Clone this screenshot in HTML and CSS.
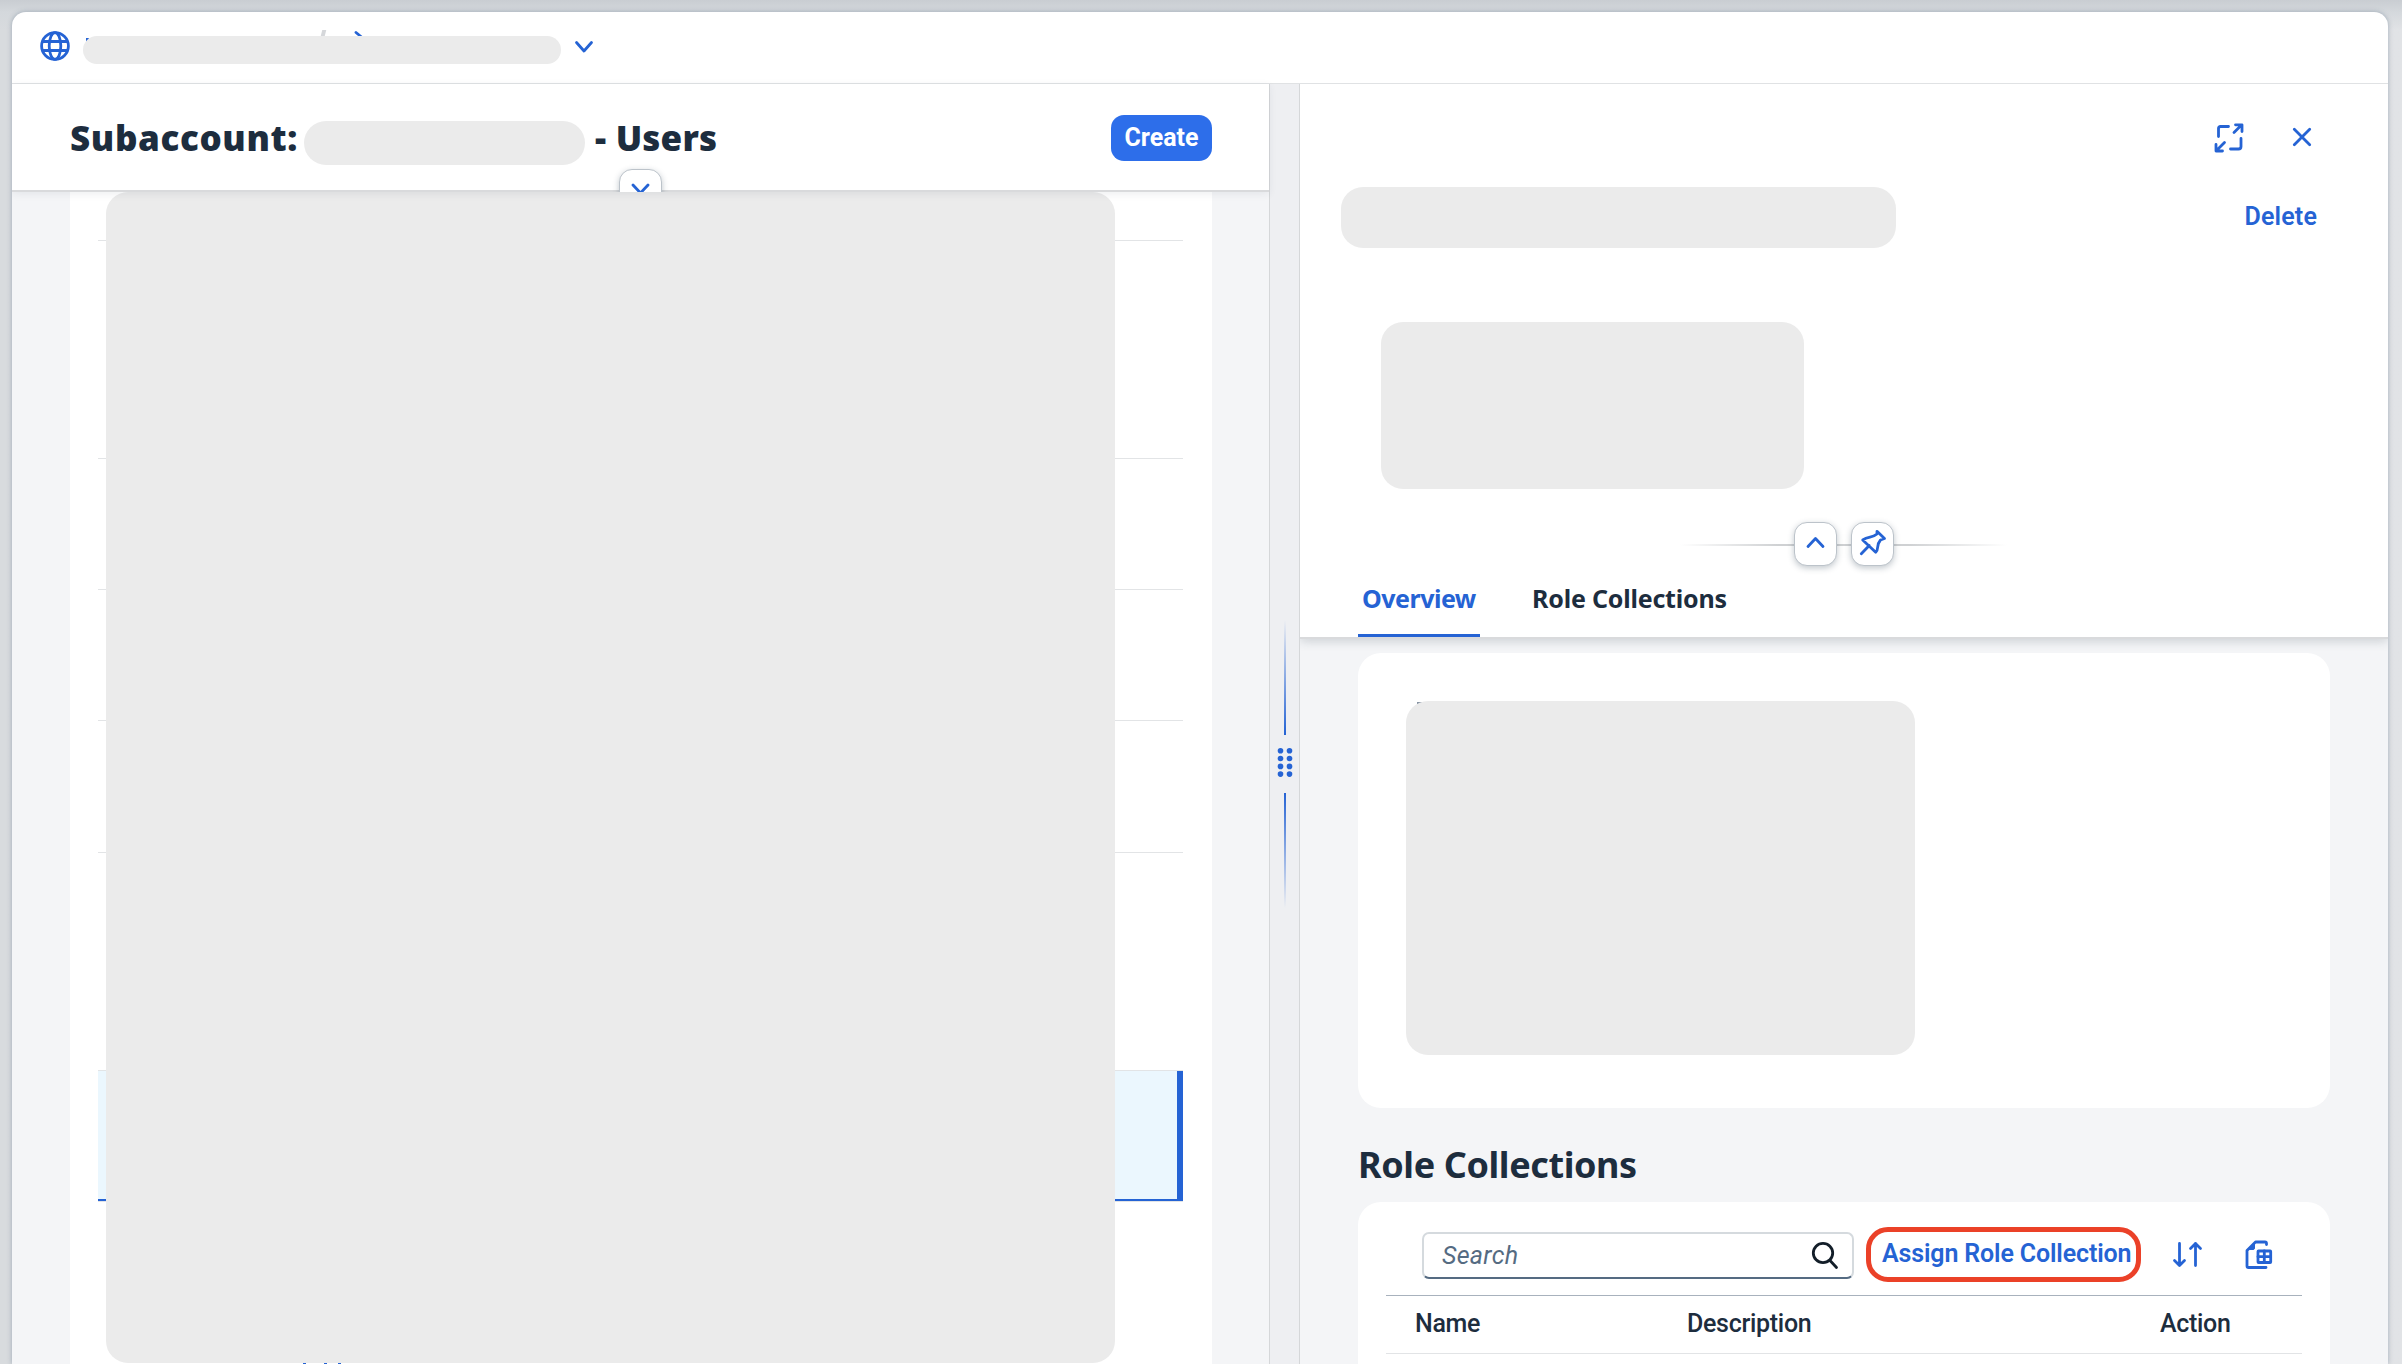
FILE: index.html
```html
<!DOCTYPE html>
<html lang="en">
<head>
<meta charset="utf-8">
<title>Subaccount - Users</title>
<link rel="stylesheet" href="styles.css">
</head>
<body>
<div class="window">
  <header class="shell">
    <svg class="globe" viewBox="0 0 30 30"><circle cx="15" cy="15" r="13.4"/><ellipse cx="15" cy="15" rx="5.8" ry="13.4"/><path d="M3 10.5H27M3 19.5H27"/></svg>
    <div class="crumbs"><i class="crumb-bit"></i><i class="crumb-slash"></i><svg class="crumb-arrow" viewBox="0 0 10 8"><path d="M2 1.5L8 6.5"/></svg><div class="mask"></div></div>
    <svg class="chev" viewBox="0 0 20 14"><path d="M2.5 2.5L10 11L17.5 2.5"/></svg>
  </header>
  <div class="columns">
    <section class="users">
      <div class="users-head">
        <h1 class="title"><span class="t-sub">Subaccount:</span><span class="title-mask mask"></span><span class="t-users">- Users</span></h1>
        <button class="create">Create</button>
        <div class="expand-clip"><div class="round-btn"><svg viewBox="0 0 43 44"><path d="M14 16L21.500 24L29 16"/></svg></div></div>
      </div>
      <div class="users-body">
        <div class="list">
          <div class="row r1"></div><div class="row r2"></div><div class="row r3"></div><div class="row r4"></div><div class="row r5"></div><div class="row r6"></div>
          <div class="row selected"></div>
          <div class="row-rest"></div>
          <div class="list-mask mask"></div>
          <i class="bit b1"></i><i class="bit b2"></i><i class="bit b3"></i>
        </div>
      </div>
    </section>
    <div class="splitter">
      <div class="grip-line up"></div>
      <svg class="dots" viewBox="0 0 16 58"><g><circle cx="3.5" cy="15.7" r="2.8"/><circle cx="12.5" cy="15.7" r="2.8"/><circle cx="3.5" cy="23.5" r="2.8"/><circle cx="12.5" cy="23.5" r="2.8"/><circle cx="3.5" cy="31.4" r="2.8"/><circle cx="12.5" cy="31.4" r="2.8"/><circle cx="3.5" cy="39.1" r="2.8"/><circle cx="12.5" cy="39.1" r="2.8"/></g></svg>
      <div class="grip-line down"></div>
    </div>
    <section class="detail">
      <div class="detail-head">
        <div class="win-actions">
          <svg class="full" viewBox="0 0 30 30"><path d="M4.500 13.500V5.500Q4.500 3.500 6.500 3.500H14.500M27 15.500V23.500Q27 26 24.500 26H16.500M20 9.500L27.500 2M21.500 1.800H28V8.500M10.500 19.500L3 27M2 21.500V28H8.500"/></svg>
          <svg class="close" viewBox="0 0 20 20"><path d="M2.300 2.300L17.700 17.700M17.700 2.300L2.300 17.700"/></svg>
        </div>
        <div class="name-row"><div class="name-mask mask"></div><a class="link delete">Delete</a></div>
        <div class="info-mask mask"></div>
        <div class="collapse"><div class="round-btn"><svg viewBox="0 0 43 44"><path d="M14 24.500L21.500 16.500L29 24.500"/></svg></div><div class="round-btn"><svg viewBox="0 0 43 44"><path d="M10.300 31.700L18.300 23.500M26 9.300L33.500 16.500L29.500 18Q27 21 26.700 25Q26.500 28.500 24.700 30.300L11.700 18Q14.500 16 19 15.200Q23 14.500 26 12Z"/></svg></div></div>
        <nav class="tabs"><div class="tab active">Overview</div><div class="tab">Role Collections</div></nav>
      </div>
      <div class="detail-body">
        <div class="card overview"><i class="card-bit"></i><div class="card-mask mask"></div></div>
        <h2 class="h-rc">Role Collections</h2>
        <div class="card roles">
          <div class="toolbar">
            <div class="search"><span>Search</span><svg viewBox="0 0 28 30"><circle cx="12" cy="12" r="9.700"/><path d="M19 19.500L25.500 26.500"/></svg></div>
            <a class="assign link">Assign Role Collection</a>
            <svg class="sort" viewBox="0 0 32 30"><path d="M7.500 3.500V25.500M2.500 20.500L7.500 25.500L12.500 20.500M23.500 25.500V3.500M18.500 8.500L23.500 3.500L28.500 8.500"/></svg>
            <svg class="export" viewBox="0 0 28 30"><path d="M21.500 4.500V3.500Q21.500 2 20 2H10.500L2 10.500V26Q2 27.500 3.500 27.500H21"/><path class="fold" d="M9.500 3V8Q9.500 9.500 8 9.500H3Z"/><rect x="13" y="11" width="12.700" height="11.500" rx=".5"/><path d="M19.300 11V22.500M13 16.700H25.500"/></svg>
          </div>
          <div class="thead"><span class="c-name">Name</span><span class="c-desc">Description</span><span class="c-act">Action</span></div>
        </div>
      </div>
    </section>
  </div>
</div>
</body>
</html>
```
FILE: styles.css
```css
* { box-sizing: border-box; }
body {
  margin: 0; width: 2402px; height: 1364px; overflow: hidden;
  padding: 12px 14px 0 12px;
  font-family: Roboto, "Liberation Sans", sans-serif; font-size: 25px; color: #1d2d3e;
  background: linear-gradient(180deg, #c9cdd2 0, #d4d8dc 12px, transparent 30px), linear-gradient(90deg, #d8dbde 0, #d4d8dc 50%, #e1e3e6 100%);
}
h1, h2 { margin: 0; }
svg { display: block; fill: none; stroke: #2563d4; stroke-width: 2.8; stroke-linecap: round; stroke-linejoin: round; flex: none; }
h1, h2, a, span { white-space: nowrap; }
.mask { background: #ebebeb; border-radius: 22px; }
.window {
  height: 1352px; display: flex; flex-direction: column; background: #fff; overflow: hidden;
  border-radius: 14px 14px 0 0; box-shadow: 0 0 5px rgba(85, 107, 130, .45);
}
.shell { height: 72px; flex: none; border-bottom: 1px solid #e0e2e4; display: flex; padding-left: 28px; }
.globe { width: 30px; height: 30px; margin-top: 19px; }
.crumbs { width: 478px; height: 28px; margin: 24px 0 0 13px; position: relative; }
.crumbs .mask { position: absolute; inset: 0; border-radius: 15px; }
.crumb-bit { position: absolute; left: 3px; top: 2px; width: 3px; height: 4px; background: #2563d4; }
.crumb-slash { position: absolute; left: 238px; top: -6px; width: 4px; height: 10px; background: #d5d7da; transform: skewX(-14deg); }
.crumb-arrow { position: absolute; left: 271px; top: -5px; width: 10px; height: 8px; }
.chev { width: 20px; height: 14px; margin: 28px 0 0 13px; }
.columns { flex: 1; display: flex; min-height: 0; }

.users { width: 1257px; display: flex; flex-direction: column; background: #f4f5f7; }
.users-head {
  height: 108px; flex: none; position: relative; z-index: 1; background: #fff; border-bottom: 2px solid #d9dadc;
  box-shadow: 0 2px 8px rgba(34, 53, 72, .08); display: flex; justify-content: space-between; padding: 31px 57px 0 58px;
}
.title { display: flex; font-family: "Noto Sans", sans-serif; font-size: 35px; font-weight: 900; line-height: 46px; }
.t-sub { width: 234px; letter-spacing: .62px; }
.title-mask { width: 281px; height: 44px; margin-top: 6px; }
.t-users { margin-left: 10px; letter-spacing: .2px; }
.create { width: 101px; height: 46px; border: 0; border-radius: 13px; background: #2d6eea; color: #fff; font: 700 25px/46px Roboto, sans-serif; padding: 0; }
.expand-clip { position: absolute; left: 597px; top: 75px; width: 70px; height: 33px; overflow: hidden; padding: 10px; }
.round-btn { width: 43px; height: 44px; flex: none; border: 1px solid #bcc3ca; border-radius: 13px; background: #fff; box-shadow: 0 2px 6px rgba(34, 53, 72, .28); }
.round-btn svg { width: 43px; height: 44px; margin: -1px; }
.users-body { flex: 1; padding: 0 57px 0 58px; }
.list { height: 1172px; background: #fff; padding: 0 29px 0 28px; position: relative; display: flex; flex-direction: column; overflow: hidden; }
.row { border-bottom: 1px solid #e2e4e6; flex: none; }
.r1 { height: 49px; } .r2 { height: 218px; } .r3 { height: 131px; } .r4 { height: 131px; } .r5 { height: 132px; } .r6 { height: 218px; }
.selected { height: 130px; background: #ebf7fe; border-bottom: 2px solid #2563d4; border-right: 6px solid #2563d4; }
.row-rest { border-top: 1px solid #e2e4e6; }
.list-mask { position: absolute; left: 36px; top: 0; width: 1009px; height: 1171px; }
.bit { position: absolute; top: 1171px; width: 3px; height: 1px; background: #2563d4; }
.b1 { left: 233px; } .b2 { left: 254px; } .b3 { left: 268px; }

.splitter { width: 31px; flex: none; background: #eeeff2; border: solid #d5d7d9; border-width: 0 1px; display: flex; flex-direction: column; align-items: center; padding-top: 536px; }
.grip-line { width: 2px; height: 115px; }
.grip-line.up { background: linear-gradient(0deg, #2563d4, rgba(37, 99, 212, 0)); }
.grip-line.down { background: linear-gradient(180deg, #2563d4, rgba(37, 99, 212, 0)); }
.dots { width: 16px; height: 58px; fill: #2563d4; stroke: none; }

.detail { flex: 1; display: flex; flex-direction: column; background: #f4f5f7; }
.detail-head { height: 555px; flex: none; background: #fff; border-bottom: 2px solid #d9dadc; box-shadow: 0 2px 10px rgba(34, 53, 72, .2); position: relative; z-index: 1; display: flex; flex-direction: column; clip-path: inset(0 0 -14px 0); }
.win-actions { height: 103px; flex: none; display: flex; justify-content: flex-end; align-items: flex-start; padding: 39px 76px 0 0; }
.full { width: 30px; height: 30px; }
.close { width: 20px; height: 20px; margin: 4px 0 0 48px; }
.name-row { height: 61px; flex: none; display: flex; justify-content: space-between; padding: 0 71px 0 41px; }
.name-mask { width: 555px; }
.link { color: #2563d4; font-weight: 600; }
.delete { line-height: 59px; letter-spacing: .15px; }
.info-mask { width: 423px; height: 167px; margin: 74px 0 0 81px; flex: none; }
.collapse { height: 44px; flex: none; margin: 33px 0 0 380px; width: 327px; display: flex; gap: 14px; padding-left: 114px; background: linear-gradient(90deg, transparent, #cfd1d3 30%, #cfd1d3 70%, transparent) 0 22px / 100% 2px no-repeat; }
.tabs { flex: 1; display: flex; gap: 50px; padding-left: 58px; font-family: "Noto Sans", sans-serif; }
.tab { height: 71px; padding: 0 3px 0 2px; line-height: 64px; font-weight: 700; letter-spacing: -.2px; }
.tab.active { width: 122px; padding-left: 4px; color: #2563d4; letter-spacing: -.5px; background: linear-gradient(#2563d4, #2563d4) 0 100% / 100% 3px no-repeat; }
.detail-body { flex: 1; padding: 14px 58px 0; }
.card { background: #fff; border-radius: 23px; }
.overview { height: 455px; padding: 48px; position: relative; }
.card-mask { width: 509px; height: 354px; position: relative; }
.card-bit { position: absolute; left: 59px; top: 49px; width: 5px; height: 4px; background: #8794a3; }
.h-rc { height: 94px; font-family: "Noto Sans", sans-serif; font-size: 36px; line-height: 113px; font-weight: 700; letter-spacing: -.4px; }
.roles { height: 200px; padding: 25px 28px 0; }
.toolbar { height: 69px; display: flex; border-bottom: 1px solid #a8b2bd; padding-left: 36px; }
.search { width: 432px; height: 47px; margin-top: 5px; border: 2px solid #d5dade; border-bottom-color: #556b82; border-radius: 7px; display: flex; justify-content: space-between; padding: 0 13px 0 18px; line-height: 43px; font-style: italic; color: #556b82; letter-spacing: .3px; }
.search svg { width: 28px; height: 30px; margin-top: 7px; stroke: #131e29; }
.assign { width: 275px; height: 55px; margin-left: 12px; border: 5px solid #eb4128; border-radius: 22px; padding-left: 11px; line-height: 44px; letter-spacing: -.14px; }
.sort { width: 32px; height: 30px; margin: 13px 0 0 31px; }
.export { width: 28px; height: 30px; margin: 13px 0 0 41px; }
.fold { fill: #2563d4; stroke-width: 1; }
.thead { height: 58px; border-bottom: 1px solid #e2e4e6; display: flex; line-height: 56px; font-weight: 500; padding-left: 29px; letter-spacing: -.3px; }
.c-name { width: 272px; } .c-desc { width: 473px; }
```
